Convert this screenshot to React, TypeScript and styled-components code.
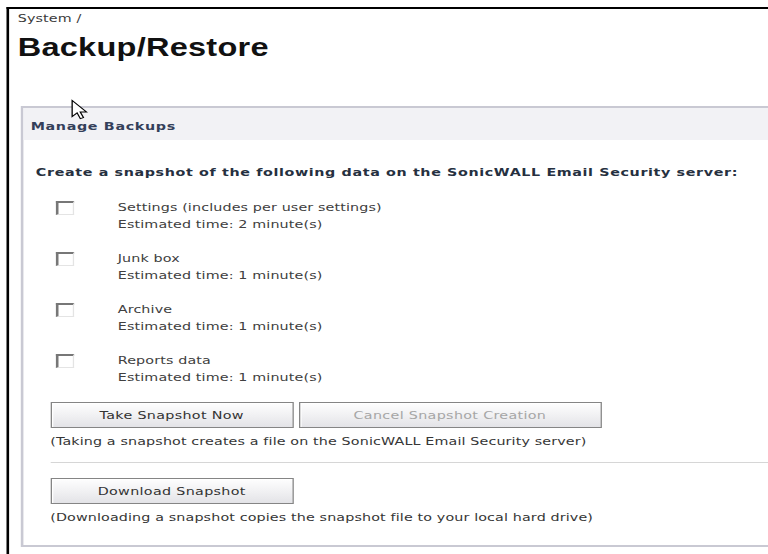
import React from "react";
import styled, { createGlobalStyle } from "styled-components";

const GlobalStyle = createGlobalStyle`
  html, body {
    margin: 0;
    padding: 0;
    background: #ffffff;
    overflow: hidden;
  }
  body {
    font-family: "DejaVu Sans", Verdana, sans-serif;
    font-size: 11px;
    letter-spacing: 0.1px;
    color: #3a3a3a;
  }
`;

const Stage = styled.div`
  position: relative;
  width: 591px;
  height: 554px;
  overflow: hidden;
  transform: scaleX(1.3);
  transform-origin: 0 0;
`;

const Frame = styled.div`
  box-sizing: border-box;
  width: 700px;
  height: 547px;
  margin: 7px 0 0 4.6px;
  border-top: 2px solid #000000;
  border-left: 2px solid #000000;
`;

const PageHead = styled.header`
  padding: 3px 0 0 7px;
`;

const Crumb = styled.div`
  line-height: 13px;
  color: #3b3b3b;
`;

const Title = styled.h1`
  margin: 10px 0 0;
  font-family: "Liberation Sans", Arial, sans-serif;
  font-size: 25px;
  line-height: 25px;
  font-weight: bold;
  letter-spacing: 0.2px;
  color: #111111;
`;

const Panel = styled.section`
  box-sizing: border-box;
  width: 680px;
  margin: 46px 0 0 9px;
  border: 2px solid #c9c9d3;
`;

const PanelHeader = styled.div`
  box-sizing: border-box;
  height: 32px;
  padding: 12px 0 0 6px;
  background: #f2f2f5;
  font-weight: bold;
  letter-spacing: 0.5px;
  line-height: 13px;
  color: #34405a;
`;

const PanelBody = styled.div`
  padding: 26px 0 20px 10px;
`;

const Lead = styled.div`
  font-weight: bold;
  letter-spacing: 0.48px;
  line-height: 13px;
  color: #263040;
`;

const OptionList = styled.div`
  display: flex;
  flex-direction: column;
  gap: 17px;
  margin-top: 20px;
  padding-left: 15px;
`;

const Option = styled.label`
  display: flex;
  align-items: flex-start;
  gap: 34px;
  line-height: 17px;
`;

const Check = styled.input`
  appearance: none;
  box-sizing: border-box;
  flex: none;
  width: 14px;
  height: 14px;
  margin: 2px 0 0;
  background: #ffffff;
  border-top: 2px solid #777777;
  border-left: 2px solid #777777;
  border-right: 1px solid #e4e4e4;
  border-bottom: 1px solid #e4e4e4;
`;

const OptionText = styled.div`
  display: flex;
  flex-direction: column;
  color: #404040;
`;

const Actions = styled.div`
  margin: 16px 0 0 11px;
`;

const ButtonRow = styled.div`
  display: flex;
  gap: 4px;
`;

const Button = styled.button<{ $width: number }>`
  box-sizing: border-box;
  width: ${(p) => p.$width}px;
  height: 26px;
  padding: 0;
  border: 1px solid #858585;
  background: linear-gradient(#fefefe 0%, #f1f1f3 50%, #e3e3e7 100%);
  box-shadow: inset 1px 1px 0 #ffffff;
  font-family: "DejaVu Sans", Verdana, sans-serif;
  font-size: 11px;
  letter-spacing: 0.25px;
  color: #333333;

  &:disabled {
    color: #a6a6a6;
  }
`;

const Note = styled.div`
  margin-top: 6px;
  line-height: 15px;
  color: #363636;
`;

const Divider = styled.hr`
  margin: 13px 0 15px;
  border: 0;
  border-top: 1px solid #d6d6d6;
`;

const Pointer = styled.svg`
  position: absolute;
  left: 55px;
  top: 100px;
  width: 12px;
  height: 20px;
  overflow: visible;
`;

const options = [
  { label: "Settings (includes per user settings)", minutes: 2 },
  { label: "Junk box", minutes: 1 },
  { label: "Archive", minutes: 1 },
  { label: "Reports data", minutes: 1 },
];

export default function App() {
  return (
    <>
      <GlobalStyle />
      <Stage>
        <Frame>
          <PageHead>
            <Crumb>System /</Crumb>
            <Title>Backup/Restore</Title>
          </PageHead>
          <Panel>
            <PanelHeader>Manage Backups</PanelHeader>
            <PanelBody>
              <Lead>
                Create a snapshot of the following data on the SonicWALL Email
                Security server:
              </Lead>
              <OptionList>
                {options.map((o) => (
                  <Option key={o.label}>
                    <Check type="checkbox" />
                    <OptionText>
                      <span>{o.label}</span>
                      <span>Estimated time: {o.minutes} minute(s)</span>
                    </OptionText>
                  </Option>
                ))}
              </OptionList>
              <Actions>
                <ButtonRow>
                  <Button $width={187}>Take Snapshot Now</Button>
                  <Button $width={233} disabled>
                    Cancel Snapshot Creation
                  </Button>
                </ButtonRow>
                <Note>
                  (Taking a snapshot creates a file on the SonicWALL Email
                  Security server)
                </Note>
                <Divider />
                <Button $width={187}>Download Snapshot</Button>
                <Note>
                  (Downloading a snapshot copies the snapshot file to your local
                  hard drive)
                </Note>
              </Actions>
            </PanelBody>
          </Panel>
        </Frame>
        <Pointer viewBox="0 0 12 20">
          <path
            d="M0.5 0.5 L0.5 16.5 L4.3 12.8 L6.8 18.6 L9.2 17.6 L6.7 11.9 L11.5 11.9 Z"
            fill="#ffffff"
            stroke="#000000"
            strokeWidth="1"
            strokeLinejoin="miter"
          />
        </Pointer>
      </Stage>
    </>
  );
}
